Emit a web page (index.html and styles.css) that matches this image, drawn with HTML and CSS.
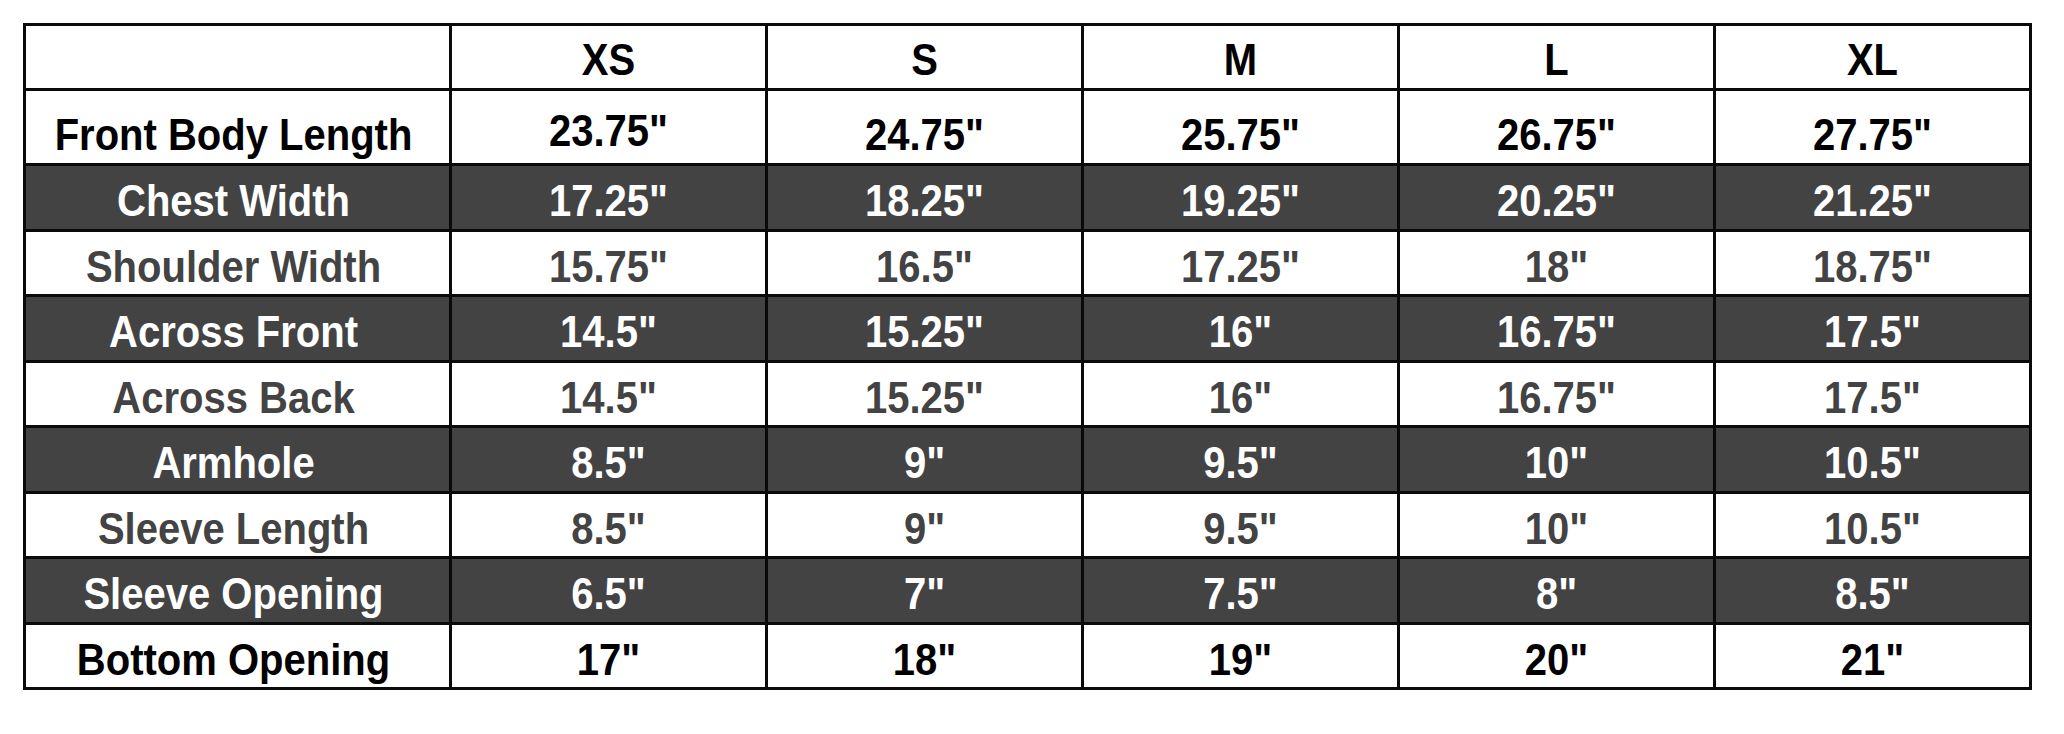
FILE: index.html
```html
<!DOCTYPE html>
<html lang="en">
<head>
<meta charset="utf-8">
<title>Size Chart</title>
<link rel="stylesheet" href="styles.css">
</head>
<body>
<div class="chart">
  <div class="cell head"></div>
  <div class="cell head"><span>XS</span></div>
  <div class="cell head"><span>S</span></div>
  <div class="cell head"><span>M</span></div>
  <div class="cell head"><span>L</span></div>
  <div class="cell head"><span>XL</span></div>

  <div class="cell light black tall label"><span>Front Body Length</span></div>
  <div class="cell light black raised"><span>23.75"</span></div>
  <div class="cell light black tall"><span>24.75"</span></div>
  <div class="cell light black tall"><span>25.75"</span></div>
  <div class="cell light black tall"><span>26.75"</span></div>
  <div class="cell light black tall"><span>27.75"</span></div>

  <div class="cell dark label"><span>Chest Width</span></div>
  <div class="cell dark"><span>17.25"</span></div>
  <div class="cell dark"><span>18.25"</span></div>
  <div class="cell dark"><span>19.25"</span></div>
  <div class="cell dark"><span>20.25"</span></div>
  <div class="cell dark"><span>21.25"</span></div>

  <div class="cell light gray label"><span>Shoulder Width</span></div>
  <div class="cell light gray"><span>15.75"</span></div>
  <div class="cell light gray"><span>16.5"</span></div>
  <div class="cell light gray"><span>17.25"</span></div>
  <div class="cell light gray"><span>18"</span></div>
  <div class="cell light gray"><span>18.75"</span></div>

  <div class="cell dark label"><span>Across Front</span></div>
  <div class="cell dark"><span>14.5"</span></div>
  <div class="cell dark"><span>15.25"</span></div>
  <div class="cell dark"><span>16"</span></div>
  <div class="cell dark"><span>16.75"</span></div>
  <div class="cell dark"><span>17.5"</span></div>

  <div class="cell light gray label"><span>Across Back</span></div>
  <div class="cell light gray"><span>14.5"</span></div>
  <div class="cell light gray"><span>15.25"</span></div>
  <div class="cell light gray"><span>16"</span></div>
  <div class="cell light gray"><span>16.75"</span></div>
  <div class="cell light gray"><span>17.5"</span></div>

  <div class="cell dark label"><span>Armhole</span></div>
  <div class="cell dark"><span>8.5"</span></div>
  <div class="cell dark"><span>9"</span></div>
  <div class="cell dark"><span>9.5"</span></div>
  <div class="cell dark"><span>10"</span></div>
  <div class="cell dark"><span>10.5"</span></div>

  <div class="cell light gray label"><span>Sleeve Length</span></div>
  <div class="cell light gray"><span>8.5"</span></div>
  <div class="cell light gray"><span>9"</span></div>
  <div class="cell light gray"><span>9.5"</span></div>
  <div class="cell light gray"><span>10"</span></div>
  <div class="cell light gray"><span>10.5"</span></div>

  <div class="cell dark label"><span>Sleeve Opening</span></div>
  <div class="cell dark"><span>6.5"</span></div>
  <div class="cell dark"><span>7"</span></div>
  <div class="cell dark"><span>7.5"</span></div>
  <div class="cell dark"><span>8"</span></div>
  <div class="cell dark"><span>8.5"</span></div>

  <div class="cell light black label"><span>Bottom Opening</span></div>
  <div class="cell light black"><span>17"</span></div>
  <div class="cell light black"><span>18"</span></div>
  <div class="cell light black"><span>19"</span></div>
  <div class="cell light black"><span>20"</span></div>
  <div class="cell light black"><span>21"</span></div>
</div>
</body>
</html>
```
FILE: styles.css
```css
html, body {
  margin: 0;
  padding: 0;
  background: #ffffff;
}

body {
  padding: 23px 0 0 23px;
  font-family: "Liberation Sans", Arial, sans-serif;
}

.chart {
  display: grid;
  grid-template-columns: 423px repeat(5, 313px);
  grid-template-rows: 62px 72px repeat(8, 62.5px);
  gap: 3px;
  padding: 3px;
  width: max-content;
  background: #0a0a0a;
}

.cell {
  display: flex;
  align-items: center;
  justify-content: center;
  padding-top: 8px;
  font-size: 40px;
  font-weight: bold;
  line-height: 1;
  white-space: nowrap;
}

.cell span {
  display: inline-block;
  transform: scaleY(1.1);
}

.head {
  background: #ffffff;
  color: #000000;
  padding-top: 6px;
}

.light {
  background: #ffffff;
}

.dark {
  background: #434343;
  color: #ffffff;
}

.black {
  color: #000000;
}

.gray {
  color: #434343;
}

.tall {
  padding-top: 16px;
}

.raised {
  padding-top: 8px;
}

.label {
  padding-right: 8px;
}
```
